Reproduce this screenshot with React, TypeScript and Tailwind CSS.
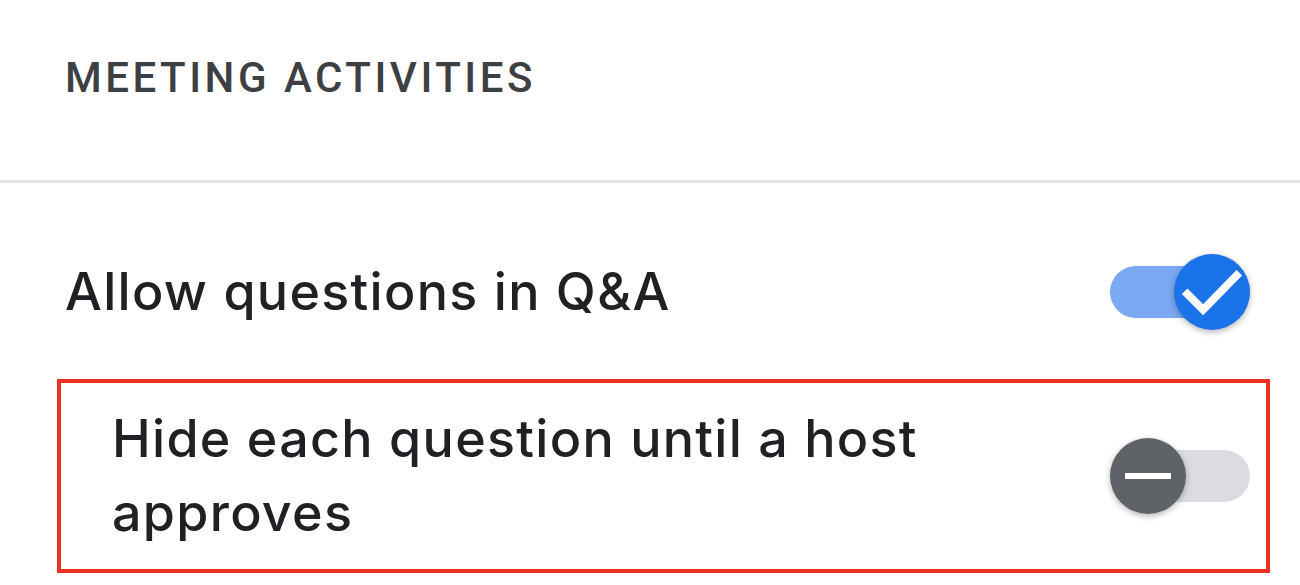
import React from 'react'

const Toggle: React.FC<{ on: boolean }> = ({ on }) => {
  return (
    <div className={`relative flex h-[76px] w-[140px] shrink-0 items-center ${on ? 'justify-end' : 'justify-start'}`}>
      <div className={`absolute inset-x-0 top-[12px] h-[52px] rounded-full ${on ? 'bg-[#7aa9f2]' : 'bg-[#dadce0]'}`}></div>
      <div
        className={`relative flex h-[76px] w-[76px] items-center justify-center rounded-full shadow-[0_2px_6px_rgba(0,0,0,0.3)] ${on ? 'bg-[#1a73e8]' : 'bg-[#5f6368]'}`}
      >
        {on ? (
          <svg width="82" height="82" viewBox="0 0 24 24" fill="none" className="shrink-0">
            <path d="M4.8 12.6l4.6 4.6L19.2 7.2" stroke="white" strokeWidth="2.3" strokeLinecap="square" />
          </svg>
        ) : (
          <div className="h-[6px] w-[46px] bg-white"></div>
        )}
      </div>
    </div>
  )
}

export default function App() {
  return (
    <div className="h-[585px] w-[1300px] overflow-hidden bg-white text-[#202124] font-['Inter',sans-serif]">
      {/* Section header */}
      <div className="h-[180px] pl-[65px] pt-[53px]">
        <h2 className="font-['Roboto',sans-serif] text-[42px] leading-[50px] font-medium tracking-[3.5px] text-[#3c4043]">
          MEETING ACTIVITIES
        </h2>
      </div>
      <div className="h-[3px] bg-[#e6e6e6]"></div>

      {/* Allow questions row */}
      <div className="mt-[34px] flex h-[150px] items-center justify-between pl-[65px] pr-[50px]">
        <span className="text-[52px] leading-[74px] font-medium tracking-[1.3px]">Allow questions in Q&amp;A</span>
        <Toggle on={true} />
      </div>

      {/* Highlighted row */}
      <div className="ml-[57px] mt-[12px] flex h-[194px] w-[1213px] items-center justify-between border-4 border-[#e93323] pl-[51px] pr-[16px]">
        <span className="w-[900px] text-[52px] leading-[74px] font-medium tracking-[1.3px]">Hide each question until a host approves</span>
        <Toggle on={false} />
      </div>
    </div>
  )
}
